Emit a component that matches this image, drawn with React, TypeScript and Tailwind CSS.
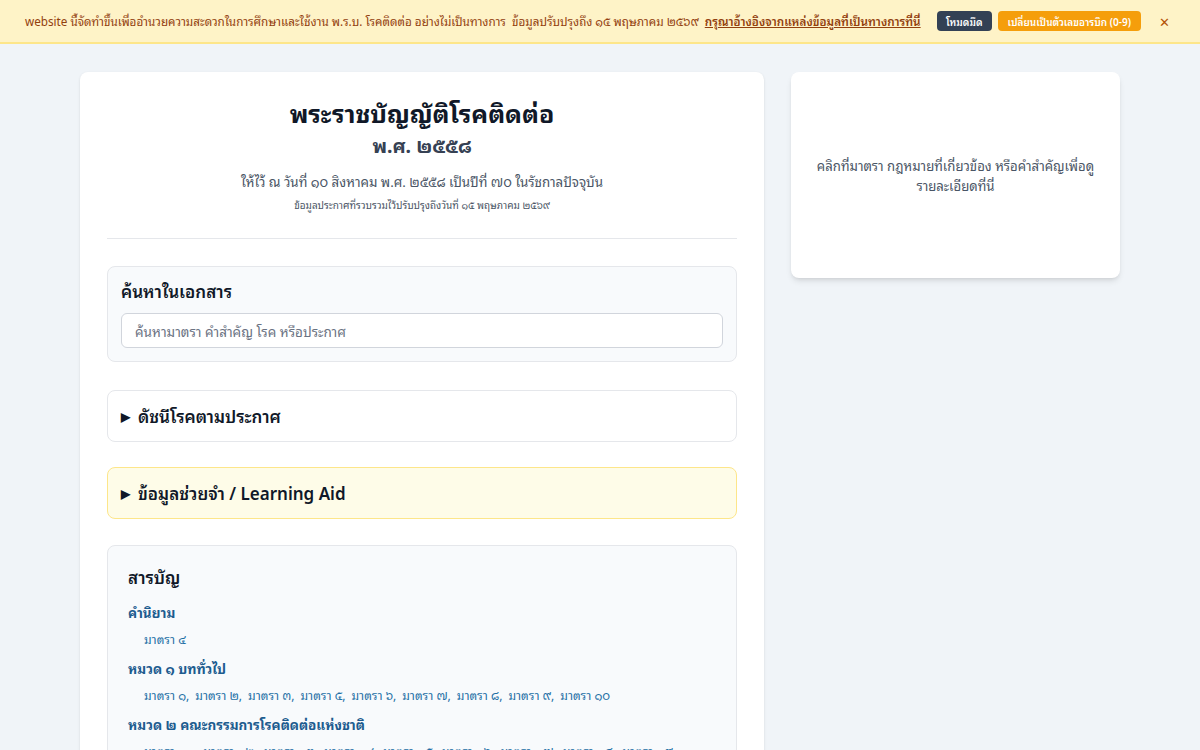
import { useState } from "react";

const toc = [
    { title: "คำนิยาม", items: ["มาตรา ๔"] },
    {
        title: "หมวด ๑ บททั่วไป",
        items: ["มาตรา ๑", "มาตรา ๒", "มาตรา ๓", "มาตรา ๕", "มาตรา ๖", "มาตรา ๗", "มาตรา ๘", "มาตรา ๙", "มาตรา ๑๐"],
    },
    {
        title: "หมวด ๒ คณะกรรมการโรคติดต่อแห่งชาติ",
        items: ["มาตรา ๑๑", "มาตรา ๑๒", "มาตรา ๑๓", "มาตรา ๑๔", "มาตรา ๑๕", "มาตรา ๑๖", "มาตรา ๑๗", "มาตรา ๑๘", "มาตรา ๑๙"],
    },
    {
        title: "หมวด ๓ คณะกรรมการโรคติดต่อจังหวัด",
        items: ["มาตรา ๒๐", "มาตรา ๒๑", "มาตรา ๒๒", "มาตรา ๒๓"],
    },
];

export default function App(): JSX.Element {
    const [showBanner, setShowBanner] = useState(true);
    const [query, setQuery] = useState("");

    return (
        <div className="min-h-screen bg-[#f0f4f8] text-gray-800" style={{ fontFamily: '"Noto Sans Thai Looped", "Noto Sans", sans-serif' }}>
            {showBanner && (
                <div className="h-[44px] bg-[#fef3c7] border-b-2 border-[#fde68a] flex items-center pl-[25px] text-[11.7px] text-[#92400e]">
                    <p>
                        website นี้จัดทำขึ้นเพื่ออำนวยความสะดวกในการศึกษาและใช้งาน พ.ร.บ. โรคติดต่อ อย่างไม่เป็นทางการ&nbsp; ข้อมูลปรับปรุงถึง ๑๕ พฤษภาคม ๒๕๖๙&nbsp;{" "}
                        <a href="#" className="font-semibold underline">กรุณาอ้างอิงจากแหล่งข้อมูลที่เป็นทางการที่นี่</a>
                    </p>
                    <div className="ml-auto mr-[30px] flex items-center gap-[6px]">
                        <button className="bg-[#334155] text-white font-semibold text-[10px] px-[9px] h-[20px] rounded">โหมดมืด</button>
                        <button className="bg-[#f59e0b] text-white font-semibold text-[10px] px-[10px] h-[20px] rounded">เปลี่ยนเป็นตัวเลขอารบิก (0-9)</button>
                        <button onClick={() => setShowBanner(false)} className="ml-[12px] text-[#b45309] text-[13px] leading-none">✕</button>
                    </div>
                </div>
            )}

            <div className="w-[1040px] mx-auto pt-[28px] flex items-start gap-[27px]">
                <main className="w-[684px] bg-white rounded-lg shadow-sm px-[27px] pt-[22px] pb-8">
                    <header className="text-center border-b border-gray-200 pb-[26px]">
                        <h1 className="text-[25px] font-bold text-gray-900 leading-[36px]">พระราชบัญญัติโรคติดต่อ</h1>
                        <h2 className="text-[19.5px] font-bold text-gray-700 leading-[28px] mt-px">พ.ศ. ๒๕๕๘</h2>
                        <p className="text-[13.3px] text-gray-600 mt-[10px] leading-[24px]">ให้ไว้ ณ วันที่ ๑๐ สิงหาคม พ.ศ. ๒๕๕๘ เป็นปีที่ ๗๐ ในรัชกาลปัจจุบัน</p>
                        <p className="text-[10px] text-gray-600 mt-[4px]">ข้อมูลประกาศที่รวบรวมไว้ปรับปรุงถึงวันที่ ๑๕ พฤษภาคม ๒๕๖๙</p>
                    </header>

                    <section className="mt-[27px] bg-[#f8fafc] border border-gray-200 rounded-lg px-[13px] pt-[12px] pb-[13px]">
                        <h3 className="text-[17px] font-semibold text-gray-900 leading-[24px]">ค้นหาในเอกสาร</h3>
                        <input
                            value={query}
                            onChange={(e) => setQuery(e.target.value)}
                            placeholder="ค้นหามาตรา คำสำคัญ โรค หรือประกาศ"
                            className="mt-[10px] w-full h-[35px] bg-white border border-gray-300 rounded-md px-[13px] text-[13.5px] placeholder:text-gray-500 outline-none"
                        />
                    </section>

                    <details className="mt-[28px] bg-white border border-gray-200 rounded-lg">
                        <summary className="list-none cursor-pointer h-[50px] flex items-center px-[13px] text-[17px] font-semibold text-gray-900">
                            <span className="text-[12px] mr-[8px]">▶</span>ดัชนีโรคตามประกาศ
                        </summary>
                    </details>

                    <details className="mt-[25px] bg-[#fefce8] border border-[#fde68a] rounded-lg">
                        <summary className="list-none cursor-pointer h-[50px] flex items-center px-[13px] text-[17px] font-semibold text-gray-900">
                            <span className="text-[12px] mr-[8px]">▶</span>ข้อมูลช่วยจำ / Learning Aid
                        </summary>
                    </details>

                    <nav className="mt-[26px] bg-[#f8fafc] border border-gray-200 rounded-lg px-[20px] pt-[17px] pb-5">
                        <h3 className="text-[17px] font-semibold text-gray-900 leading-[28px]">สารบัญ</h3>
                        {toc.map((chapter, i) => (
                            <div key={i} className={i === 0 ? "mt-[9px]" : "mt-[3px]"}>
                                <h4 className="text-[13.5px] font-bold text-[#1d5c8f] leading-[24px]">{chapter.title}</h4>
                                <div className="pl-[16px] pt-[3px] pb-[2px] text-[12px] text-[#1d6fa5] leading-[24px] flex flex-wrap">
                                    {chapter.items.map((item, j) => (
                                        <a key={j} href="#" className="mr-[6px]">
                                            {item}
                                            {j < chapter.items.length - 1 ? "," : ""}
                                        </a>
                                    ))}
                                </div>
                            </div>
                        ))}
                    </nav>
                </main>

                <aside className="w-[329px] h-[206px] bg-white rounded-lg shadow-md flex items-center justify-center px-4">
                    <p className="text-center text-[13.2px] text-gray-600 leading-[20px]">
                        คลิกที่มาตรา กฎหมายที่เกี่ยวข้อง หรือคำสำคัญเพื่อดู
                        <br />
                        รายละเอียดที่นี่
                    </p>
                </aside>
            </div>
        </div>
    );
}
